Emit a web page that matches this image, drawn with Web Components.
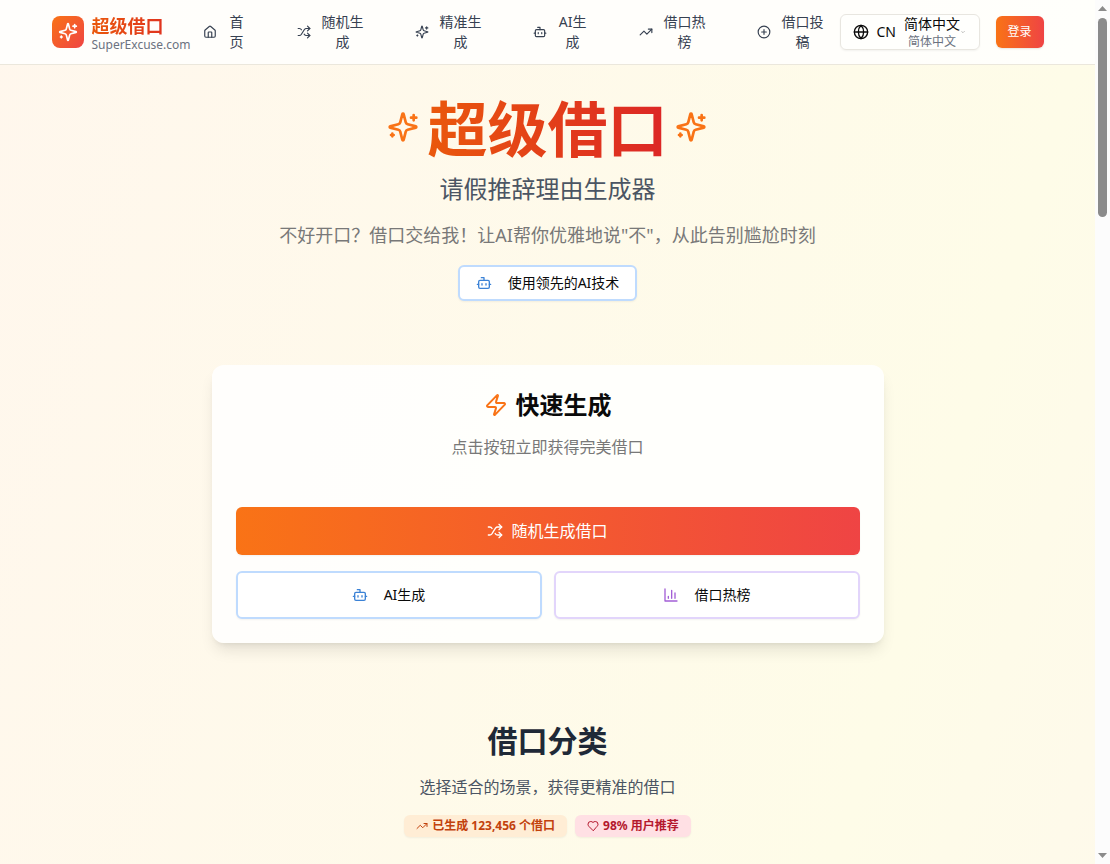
<!DOCTYPE html>
<html lang="zh-CN">
<head>
    <meta charset="UTF-8">
    <meta name="viewport" content="width=device-width, initial-scale=1.0">
    <title>超级借口</title>
    <style>
        body {
            margin: 0;
            font-family: "Noto Sans", "Noto Sans CJK SC", sans-serif;
            color: #0a0a0a;
        }
    </style>
</head>
<body>
    <excuse-app></excuse-app>

    <script>
        const ICONS = {
            sparkles: '<path d="M9.937 15.5A2 2 0 0 0 8.5 14.063l-6.135-1.582a.5.5 0 0 1 0-.962L8.5 9.936A2 2 0 0 0 9.937 8.5l1.582-6.135a.5.5 0 0 1 .963 0L14.063 8.5A2 2 0 0 0 15.5 9.937l6.135 1.581a.5.5 0 0 1 0 .964L15.5 14.063a2 2 0 0 0-1.437 1.437l-1.582 6.135a.5.5 0 0 1-.963 0z"/><path d="M20 3v4M22 5h-4M4 17v2M5 18H3"/>',
            home: '<path d="M15 21v-8a1 1 0 0 0-1-1h-4a1 1 0 0 0-1 1v8"/><path d="M3 10a2 2 0 0 1 .709-1.528l7-5.999a2 2 0 0 1 2.582 0l7 5.999A2 2 0 0 1 21 10v9a2 2 0 0 1-2 2H5a2 2 0 0 1-2-2z"/>',
            shuffle: '<path d="m18 14 4 4-4 4M18 2l4 4-4 4"/><path d="M2 18h1.973a4 4 0 0 0 3.3-1.7l5.454-8.6a4 4 0 0 1 3.3-1.7H22"/><path d="M2 6h1.972a4 4 0 0 1 3.6 2.2"/><path d="M22 18h-6.041a4 4 0 0 1-3.3-1.8l-.359-.45"/>',
            bot: '<path d="M12 8V4H8"/><rect width="16" height="12" x="4" y="8" rx="2"/><path d="M2 14h2M20 14h2M15 13v2M9 13v2"/>',
            trending: '<path d="M22 7 13.5 15.5 8.5 10.5 2 17"/><path d="M16 7h6v6"/>',
            plus: '<circle cx="12" cy="12" r="10"/><path d="M8 12h8M12 8v8"/>',
            globe: '<circle cx="12" cy="12" r="10"/><path d="M12 2a14.5 14.5 0 0 0 0 20 14.5 14.5 0 0 0 0-20M2 12h20"/>',
            chevron: '<path d="m6 9 6 6 6-6"/>',
            zap: '<path d="M4 14a1 1 0 0 1-.78-1.63l9.9-10.2a.5.5 0 0 1 .86.46l-1.92 6.02A1 1 0 0 0 13 10h7a1 1 0 0 1 .78 1.63l-9.9 10.2a.5.5 0 0 1-.86-.46l1.92-6.02A1 1 0 0 0 11 14z"/>',
            chart: '<path d="M3 3v18h18M18 17V9M13 17V5M8 17v-3"/>',
            heart: '<path d="M19 14c1.49-1.46 3-3.21 3-5.5A5.5 5.5 0 0 0 16.5 3c-1.76 0-3 .5-4.5 2-1.5-1.5-2.74-2-4.5-2A5.5 5.5 0 0 0 2 8.5c0 2.3 1.5 4.05 3 5.5l7 7Z"/>'
        };

        class LineIcon extends HTMLElement {
            constructor() {
                super();
                this.attachShadow({ mode: 'open' });
            }

            connectedCallback() {
                this.shadowRoot.innerHTML = `
                <style>
                    :host {
                        display: block;
                        flex: none;
                        width: var(--icon-size, 16px);
                        height: var(--icon-size, 16px);
                    }

                    svg {
                        display: block;
                        width: 100%;
                        height: 100%;
                    }
                </style>
                <svg viewBox="0 0 24 24" fill="none" stroke="currentColor" stroke-width="2" stroke-linecap="round" stroke-linejoin="round" aria-hidden="true">${ICONS[this.getAttribute('name')]}</svg>
                `;
            }
        }

        class SiteLogo extends HTMLElement {
            constructor() {
                super();
                this.attachShadow({ mode: 'open' });
            }

            connectedCallback() {
                this.shadowRoot.innerHTML = `
                <style>
                    :host {
                        display: block;
                        flex: none;
                    }

                    a {
                        display: flex;
                        align-items: center;
                        gap: 8px;
                        text-decoration: none;
                    }

                    .mark {
                        display: grid;
                        place-items: center;
                        width: 32px;
                        height: 32px;
                        border-radius: 8px;
                        color: #fff;
                        background: linear-gradient(to bottom right, #f97316, #ef4444);
                        --icon-size: 20px;
                    }

                    .names {
                        display: flex;
                        flex-direction: column;
                        padding-top: 4px;
                    }

                    .name {
                        font-size: 18px;
                        line-height: 22px;
                        font-weight: 700;
                        color: transparent;
                        background: linear-gradient(to right, #ea580c, #dc2626);
                        background-clip: text;
                        -webkit-background-clip: text;
                    }

                    .domain {
                        font-size: 12px;
                        line-height: 16px;
                        color: #6b7280;
                    }
                </style>
                <a href="#">
                    <span class="mark"><line-icon name="sparkles"></line-icon></span>
                    <span class="names">
                        <span class="name">超级借口</span>
                        <span class="domain">SuperExcuse.com</span>
                    </span>
                </a>
                `;
            }
        }

        class NavItem extends HTMLElement {
            constructor() {
                super();
                this.attachShadow({ mode: 'open' });
            }

            connectedCallback() {
                this.shadowRoot.innerHTML = `
                <style>
                    :host {
                        display: block;
                        flex: none;
                        --label-width: 48px;
                        --icon-size: 14px;
                    }

                    :host([size="short"]) {
                        --label-width: 24px;
                    }

                    :host([size="medium"]) {
                        --label-width: 36px;
                    }

                    a {
                        display: flex;
                        align-items: center;
                        gap: 8px;
                        font-size: 14px;
                        line-height: 20px;
                        color: #374151;
                        text-align: center;
                        text-decoration: none;
                    }

                    span {
                        width: var(--label-width);
                    }
                </style>
                <a href="#"><line-icon name="${this.getAttribute('icon')}"></line-icon><span><slot></slot></span></a>
                `;
            }
        }

        class LanguagePicker extends HTMLElement {
            constructor() {
                super();
                this.attachShadow({ mode: 'open' });
            }

            connectedCallback() {
                this.shadowRoot.innerHTML = `
                <style>
                    :host {
                        display: block;
                    }

                    button {
                        display: flex;
                        align-items: center;
                        gap: 8px;
                        box-sizing: border-box;
                        width: 140px;
                        height: 36px;
                        padding: 0 12px;
                        border: 1px solid #e8e6e0;
                        border-radius: 6px;
                        background: rgba(255, 255, 255, 0.6);
                        box-shadow: 0 1px 2px rgba(0, 0, 0, 0.05);
                        font: 400 14px/20px "Noto Sans", "Noto Sans CJK SC", sans-serif;
                        color: #0a0a0a;
                        cursor: pointer;
                    }

                    .current {
                        display: flex;
                        align-items: center;
                    }

                    .names {
                        display: flex;
                        flex-direction: column;
                        align-items: center;
                        white-space: nowrap;
                    }

                    .native {
                        font-size: 12px;
                        line-height: 16px;
                        color: #6b7280;
                    }

                    .current line-icon {
                        --icon-size: 6px;
                        opacity: 0.5;
                    }
                </style>
                <button type="button" aria-haspopup="listbox">
                    <line-icon name="globe"></line-icon>
                    <span>CN</span>
                    <span class="current">
                        <span class="names">
                            <span>简体中文</span>
                            <span class="native">简体中文</span>
                        </span>
                        <line-icon name="chevron"></line-icon>
                    </span>
                </button>
                `;
            }
        }

        class SiteHeader extends HTMLElement {
            constructor() {
                super();
                this.attachShadow({ mode: 'open' });
            }

            connectedCallback() {
                this.shadowRoot.innerHTML = `
                <style>
                    :host {
                        display: block;
                        border-bottom: 1px solid #ebe7dc;
                        background: rgba(255, 255, 255, 0.8);
                    }

                    .bar {
                        display: flex;
                        align-items: center;
                        box-sizing: border-box;
                        max-width: 1024px;
                        height: 64px;
                        margin: 0 auto;
                        padding: 0 16px;
                    }

                    nav {
                        display: flex;
                        align-items: center;
                        gap: 48px;
                        margin-left: 12px;
                    }

                    .actions {
                        display: flex;
                        align-items: center;
                        gap: 16px;
                        margin-left: auto;
                    }

                    .login {
                        width: 48px;
                        height: 32px;
                        padding: 0;
                        border: none;
                        border-radius: 6px;
                        background: linear-gradient(to right, #f97316, #ef4444);
                        box-shadow: 0 1px 2px rgba(0, 0, 0, 0.1);
                        font: 400 12px/16px "Noto Sans", "Noto Sans CJK SC", sans-serif;
                        color: #fff;
                        cursor: pointer;
                    }
                </style>
                <div class="bar">
                    <site-logo></site-logo>
                    <nav>
                        <nav-item icon="home" size="short">首页</nav-item>
                        <nav-item icon="shuffle">随机生成</nav-item>
                        <nav-item icon="sparkles">精准生成</nav-item>
                        <nav-item icon="bot" size="medium">AI生成</nav-item>
                        <nav-item icon="trending">借口热榜</nav-item>
                        <nav-item icon="plus">借口投稿</nav-item>
                    </nav>
                    <div class="actions">
                        <language-picker></language-picker>
                        <button class="login" type="button">登录</button>
                    </div>
                </div>
                `;
            }
        }

        class ActionButton extends HTMLElement {
            constructor() {
                super();
                this.attachShadow({ mode: 'open' });
            }

            connectedCallback() {
                this.shadowRoot.innerHTML = `
                <style>
                    :host {
                        display: block;
                    }

                    button {
                        display: flex;
                        align-items: center;
                        justify-content: center;
                        gap: 16px;
                        box-sizing: border-box;
                        width: 100%;
                        height: 48px;
                        padding: 0 16px;
                        border: 2px solid #bfdbfe;
                        border-radius: 6px;
                        background: #fff;
                        box-shadow: 0 1px 2px rgba(0, 0, 0, 0.05);
                        font: 400 14px/20px "Noto Sans", "Noto Sans CJK SC", sans-serif;
                        color: #0a0a0a;
                        cursor: pointer;
                    }

                    line-icon {
                        color: #3b82d6;
                    }

                    :host([size="small"]) button {
                        height: 36px;
                    }

                    :host([tone="purple"]) button {
                        border-color: #e2d5fb;
                    }

                    :host([tone="purple"]) line-icon {
                        color: #a35fd6;
                    }

                    :host([tone="primary"]) button {
                        gap: 8px;
                        border: none;
                        background: linear-gradient(to right, #f97316, #ef4444);
                        font-size: 16px;
                        line-height: 24px;
                        color: #fff;
                    }

                    :host([tone="primary"]) line-icon {
                        color: #fff;
                    }
                </style>
                <button type="button"><line-icon name="${this.getAttribute('icon')}"></line-icon><span><slot></slot></span></button>
                `;
            }
        }

        class HeroIntro extends HTMLElement {
            constructor() {
                super();
                this.attachShadow({ mode: 'open' });
            }

            connectedCallback() {
                this.shadowRoot.innerHTML = `
                <style>
                    :host {
                        display: flex;
                        flex-direction: column;
                        align-items: center;
                        gap: 16px;
                        text-align: center;
                    }

                    .heading {
                        display: flex;
                        flex-direction: column;
                        align-items: center;
                        gap: 12px;
                    }

                    .title {
                        display: flex;
                        align-items: center;
                        gap: 8px;
                        color: #f97316;
                        --icon-size: 32px;
                    }

                    .title line-icon {
                        margin-bottom: 4px;
                    }

                    h1 {
                        margin: 0;
                        font-size: 60px;
                        line-height: 64px;
                        font-weight: 700;
                        color: transparent;
                        background: linear-gradient(to right, #ea580c, #dc2626);
                        background-clip: text;
                        -webkit-background-clip: text;
                    }

                    p {
                        margin: 0;
                        font-size: 18px;
                        line-height: 28px;
                        color: #787878;
                    }

                    .subtitle {
                        font-size: 24px;
                        line-height: 32px;
                        color: #4b5563;
                    }
                </style>
                <div class="heading">
                    <div class="title">
                        <line-icon name="sparkles"></line-icon>
                        <h1>超级借口</h1>
                        <line-icon name="sparkles"></line-icon>
                    </div>
                    <p class="subtitle">请假推辞理由生成器</p>
                </div>
                <p>不好开口？借口交给我！让AI帮你优雅地说"不"，从此告别尴尬时刻</p>
                <action-button icon="bot" size="small">使用领先的AI技术</action-button>
                `;
            }
        }

        class QuickCard extends HTMLElement {
            constructor() {
                super();
                this.attachShadow({ mode: 'open' });
            }

            connectedCallback() {
                this.shadowRoot.innerHTML = `
                <style>
                    :host {
                        display: block;
                        box-sizing: border-box;
                        width: 100%;
                        max-width: 672px;
                        padding: 24px;
                        border-radius: 12px;
                        background: rgba(255, 255, 255, 0.85);
                        box-shadow: 0 10px 15px -3px rgba(0, 0, 0, 0.1), 0 4px 6px -4px rgba(0, 0, 0, 0.1);
                    }

                    h2 {
                        display: flex;
                        align-items: center;
                        justify-content: center;
                        gap: 8px;
                        margin: 0 0 14px;
                        font-size: 24px;
                        line-height: 32px;
                        font-weight: 700;
                        --icon-size: 24px;
                    }

                    h2 line-icon {
                        color: #f97316;
                    }

                    p {
                        margin: 0 0 48px;
                        font-size: 16px;
                        line-height: 24px;
                        color: #787878;
                        text-align: center;
                    }

                    .pair {
                        display: grid;
                        grid-template-columns: 1fr 1fr;
                        gap: 12px;
                        margin-top: 16px;
                    }
                </style>
                <h2><line-icon name="zap"></line-icon>快速生成</h2>
                <p>点击按钮立即获得完美借口</p>
                <action-button icon="shuffle" tone="primary">随机生成借口</action-button>
                <div class="pair">
                    <action-button icon="bot">AI生成</action-button>
                    <action-button icon="chart" tone="purple">借口热榜</action-button>
                </div>
                `;
            }
        }

        class StatBadge extends HTMLElement {
            constructor() {
                super();
                this.attachShadow({ mode: 'open' });
            }

            connectedCallback() {
                this.shadowRoot.innerHTML = `
                <style>
                    :host {
                        display: flex;
                        align-items: center;
                        gap: 4px;
                        padding: 3px 12px;
                        border-radius: 6px;
                        background: #ffedd5;
                        box-shadow: 0 1px 2px rgba(0, 0, 0, 0.05);
                        font-size: 12px;
                        line-height: 16px;
                        font-weight: 700;
                        color: #c2410c;
                        --icon-size: 12px;
                    }

                    :host([tone="red"]) {
                        background: #ffe0e4;
                        color: #b4182d;
                    }
                </style>
                <line-icon name="${this.getAttribute('icon')}"></line-icon><span><slot></slot></span>
                `;
            }
        }

        class CategoryIntro extends HTMLElement {
            constructor() {
                super();
                this.attachShadow({ mode: 'open' });
            }

            connectedCallback() {
                this.shadowRoot.innerHTML = `
                <style>
                    :host {
                        display: flex;
                        flex-direction: column;
                        align-items: center;
                        gap: 16px;
                    }

                    h2 {
                        margin: 0;
                        font-size: 30px;
                        line-height: 36px;
                        font-weight: 700;
                        color: #1f2937;
                    }

                    p {
                        margin: 0;
                        font-size: 16px;
                        line-height: 24px;
                        color: #4b5563;
                    }

                    .badges {
                        display: flex;
                        gap: 8px;
                    }
                </style>
                <h2>借口分类</h2>
                <p>选择适合的场景，获得更精准的借口</p>
                <div class="badges">
                    <stat-badge icon="trending">已生成 123,456 个借口</stat-badge>
                    <stat-badge icon="heart" tone="red">98% 用户推荐</stat-badge>
                </div>
                `;
            }
        }

        class ScrollRail extends HTMLElement {
            constructor() {
                super();
                this.attachShadow({ mode: 'open' });
            }

            connectedCallback() {
                this.shadowRoot.innerHTML = `
                <style>
                    :host {
                        display: flex;
                        flex-direction: column;
                        align-items: center;
                        box-sizing: border-box;
                        padding: 6px 0;
                        background: #fcfcfc;
                    }

                    svg {
                        display: block;
                        width: 9px;
                        height: 5px;
                        fill: #8b8b8b;
                    }

                    .track {
                        flex: 1;
                        width: 9px;
                        padding: 7px 0;
                    }

                    .thumb {
                        height: 24%;
                        border-radius: 5px;
                        background: #8b8b8b;
                    }
                </style>
                <svg viewBox="0 0 9 5"><path d="M0 5 4.500 0 9 5z"/></svg>
                <div class="track"><div class="thumb"></div></div>
                <svg viewBox="0 0 9 5"><path d="M0 0 4.500 5 9 0z"/></svg>
                `;
            }
        }

        class ExcuseApp extends HTMLElement {
            constructor() {
                super();
                this.attachShadow({ mode: 'open' });
            }

            connectedCallback() {
                this.shadowRoot.innerHTML = `
                <style>
                    :host {
                        display: grid;
                        grid-template-columns: 1fr 15px;
                        height: 100vh;
                    }

                    .page {
                        overflow: hidden;
                        background: linear-gradient(to bottom right, #fff7ed, #fefce8, #fef2f2) top / 100% 3636px;
                    }

                    main {
                        display: flex;
                        flex-direction: column;
                        align-items: center;
                        padding: 32px 16px;
                    }

                    quick-card {
                        margin: 64px 0 80px;
                    }
                </style>
                <div class="page">
                    <site-header></site-header>
                    <main>
                        <hero-intro></hero-intro>
                        <quick-card></quick-card>
                        <category-intro></category-intro>
                    </main>
                </div>
                <scroll-rail></scroll-rail>
                `;
            }
        }

        customElements.define('line-icon', LineIcon);
        customElements.define('site-logo', SiteLogo);
        customElements.define('nav-item', NavItem);
        customElements.define('language-picker', LanguagePicker);
        customElements.define('site-header', SiteHeader);
        customElements.define('action-button', ActionButton);
        customElements.define('hero-intro', HeroIntro);
        customElements.define('quick-card', QuickCard);
        customElements.define('stat-badge', StatBadge);
        customElements.define('category-intro', CategoryIntro);
        customElements.define('scroll-rail', ScrollRail);
        customElements.define('excuse-app', ExcuseApp);
    </script>
</body>
</html>
